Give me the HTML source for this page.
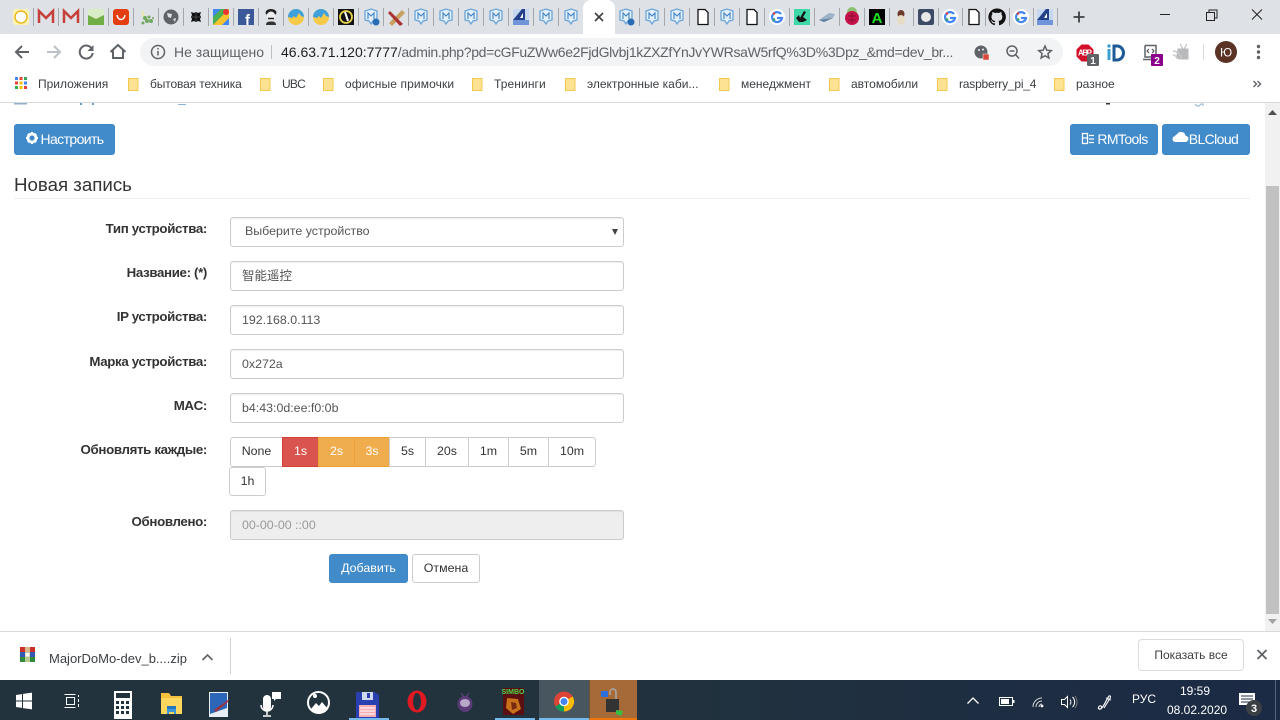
<!DOCTYPE html>
<html lang="ru"><head><meta charset="utf-8"><title>MajorDoMo</title>
<style>
*{box-sizing:border-box}
html,body{margin:0;padding:0;width:1280px;height:720px;overflow:hidden;background:#fff;font-family:"Liberation Sans","Noto Sans CJK SC",sans-serif}
.a{position:absolute;white-space:nowrap}
#ic{position:absolute;left:0;top:0;width:1280px;height:720px;z-index:2}
.bm{font-size:12px;color:#3c4043;top:77px;line-height:14px}
.lb{font-size:13.3px;font-weight:bold;color:#333;text-align:right;right:1073px;line-height:18px;letter-spacing:-.35px}
.in{left:230px;width:394px;height:30px;border:1px solid #ccc;border-radius:3px;background:#fff;font-size:12.4px;color:#555;line-height:28px;padding-left:11px;box-shadow:inset 0 1px 1px rgba(0,0,0,.07)}
.b{top:437px;height:30px;border:1px solid #ccc;background:#fff;font-size:12.4px;color:#333;line-height:27px;text-align:center}
.p{background:#428bca;border:1px solid #3f87c5;color:#fff;border-radius:3px;font-size:14px;letter-spacing:-.6px;height:31px;line-height:28px;top:124px;text-align:center}
</style></head><body>
<div class="a" style="left:0;top:0;width:1280px;height:34px;background:#dee1e6"></div>
<div class="a" style="left:583px;top:0;width:32px;height:34px;background:#fff;border-radius:8px 8px 0 0"></div>
<div class="a" style="left:140px;top:38px;width:923px;height:28px;background:#f1f3f4;border-radius:14px"></div>
<div class="a" style="left:0;top:102px;width:1280px;height:1px;background:#d9d9d9"></div>

<div class="a" style="left:174px;top:44px;font-size:14px;line-height:16px;color:#5f6368">Не защищено</div>
<div class="a" style="left:281px;top:44px;font-size:14px;line-height:16px;color:#202124">46.63.71.120:7777<span style="color:#5f6368;letter-spacing:-.33px">/admin.php?pd=cGFuZWw6e2FjdGlvbj1kZXZfYnJvYWRsaW5rfQ%3D%3Dpz_&amp;md=dev_br...</span></div>

<div class="a bm" style="left:38px">Приложения</div>
<div class="a bm" style="left:150px;letter-spacing:-.13px">бытовая техника</div>
<div class="a bm" style="left:282px;letter-spacing:-.8px">UBC</div>
<div class="a bm" style="left:345px;letter-spacing:.12px">офисные примочки</div>
<div class="a bm" style="left:494px;letter-spacing:.1px">Тренинги</div>
<div class="a bm" style="left:587px">электронные каби...</div>
<div class="a bm" style="left:741px">менеджмент</div>
<div class="a bm" style="left:851px">автомобили</div>
<div class="a bm" style="left:959px;letter-spacing:-.2px">raspberry_pi_4</div>
<div class="a bm" style="left:1076px">разное</div>

<!-- page -->
<div class="a p" style="left:14px;width:101px;padding-left:15px">Настроить</div>
<div class="a p" style="left:1070px;width:88px;padding-left:17px">RMTools</div>
<div class="a p" style="left:1162px;width:88px;padding-left:15px">BLCloud</div>
<div class="a" style="left:14px;top:174px;font-size:18.7px;line-height:22px;color:#333">Новая запись</div>
<div class="a" style="left:14px;top:198px;width:1236px;height:1px;background:#eee"></div>

<div class="a lb" style="top:220px">Тип устройства:</div>
<div class="a lb" style="top:264px">Название: (*)</div>
<div class="a lb" style="top:308px">IP устройства:</div>
<div class="a lb" style="top:353px">Марка устройства:</div>
<div class="a lb" style="top:397px">MAC:</div>
<div class="a lb" style="top:441px">Обновлять каждые:</div>
<div class="a lb" style="top:513px">Обновлено:</div>

<div class="a in" style="top:217px;padding-left:14px;line-height:27px">Выберите устройство</div>
<div class="a in" style="top:261px;font-size:12.5px;line-height:28px">智能遥控</div>
<div class="a in" style="top:305px">192.168.0.113</div>
<div class="a in" style="top:349px">0x272a</div>
<div class="a in" style="top:393px">b4:43:0d:ee:f0:0b</div>
<div class="a in" style="top:510px;background:#eee;color:#999">00-00-00 ::00</div>

<div class="a b" style="left:230px;width:53px;border-radius:3px 0 0 3px">None</div>
<div class="a b" style="left:282px;width:37px;background:#d9534f;border-color:#d43f3a;color:#fff">1s</div>
<div class="a b" style="left:318px;width:37px;background:#f0ad4e;border-color:#eea236;color:#fff">2s</div>
<div class="a b" style="left:354px;width:36px;background:#f0ad4e;border-color:#eea236;color:#fff">3s</div>
<div class="a b" style="left:389px;width:37px">5s</div>
<div class="a b" style="left:425px;width:44px">20s</div>
<div class="a b" style="left:468px;width:41px">1m</div>
<div class="a b" style="left:508px;width:41px">5m</div>
<div class="a b" style="left:548px;width:48px;border-radius:0 3px 3px 0">10m</div>
<div class="a b" style="left:229px;top:467px;width:37px;height:29px;border-radius:3px">1h</div>

<div class="a b" style="left:329px;top:554px;width:79px;height:29px;background:#428bca;border-color:#3f87c5;color:#fff;border-radius:3px">Добавить</div>
<div class="a b" style="left:412px;top:554px;width:68px;height:29px;border-radius:3px">Отмена</div>

<!-- scrollbar -->
<div class="a" style="left:1265px;top:103px;width:15px;height:528px;background:#f1f1f1"></div>
<div class="a" style="left:1266px;top:186px;width:13px;height:428px;background:#c1c1c1"></div>

<!-- download bar -->
<div class="a" style="left:0;top:631px;width:1280px;height:1px;background:#d9d9d9"></div>
<div class="a" style="left:49px;top:651px;font-size:13px;line-height:15px;color:#3c4043">MajorDoMo-dev_b....zip</div>
<div class="a" style="left:230px;top:638px;width:1px;height:36px;background:#d0d0d0"></div>
<div class="a" style="left:1138px;top:639px;width:106px;height:32px;border:1px solid #dadce0;border-radius:4px;font-size:12px;line-height:30px;text-align:center;color:#3c4043">Показать все</div>

<!-- taskbar -->
<div class="a" style="left:0;top:680px;width:1280px;height:40px;background:linear-gradient(90deg,#22333d 0,#22333d 45%,#1b2a45 100%)"></div>
<div class="a" style="left:539px;top:680px;width:50px;height:40px;background:#47565f;border-bottom:2px solid #76b9ed"></div>
<div class="a" style="left:589px;top:680px;width:48px;height:40px;background:#a66a38;border-left:1px solid #6d5238;border-bottom:2px solid #f0750a"></div>
<div class="a" style="left:349px;top:718px;width:40px;height:2px;background:#76b9ed"></div>
<div class="a" style="left:495px;top:718px;width:40px;height:2px;background:#76b9ed"></div>
<div class="a" style="left:1132px;top:692px;font-size:12px;line-height:14px;color:#fff">РУС</div>
<div class="a" style="left:1170px;top:684px;width:80px;font-size:12px;line-height:14px;color:#fff;text-align:left;padding-left:10px">19:59</div>
<div class="a" style="left:1167px;top:703px;font-size:12px;line-height:14px;color:#fff">08.02.2020</div>

<svg id="ic" viewBox="0 0 1280 720" xmlns="http://www.w3.org/2000/svg" font-family="Liberation Sans, sans-serif">
<!-- separators -->
<g stroke="#a4a8ad" stroke-width="1">
<path d="M33.500 8V26M58.500 8V26M83.500 8V26M108.500 8V26M133.500 8V26M158.500 8V26M183.500 8V26M208.500 8V26M233.500 8V26M258.500 8V26M283.500 8V26M308.500 8V26M333.500 8V26M358.500 8V26M383.500 8V26M408.500 8V26M433.500 8V26M458.500 8V26M483.500 8V26M508.500 8V26M533.500 8V26M558.500 8V26M639.500 8V26M664.500 8V26M689.500 8V26M714.500 8V26M739.500 8V26M764.500 8V26M789.500 8V26M814.500 8V26M839.500 8V26M864.500 8V26M889.500 8V26M913.500 8V26M938.500 8V26M962.500 8V26M985.500 8V26M1009.500 8V26M1033.500 8V26M1057.500 8V26"/>
</g>
<!-- favicons -->
<rect x="13" y="9" width="16" height="16" rx="3" fill="#fdf3b0"/><circle cx="21" cy="17" r="6" fill="#fff" stroke="#e8b820" stroke-width="1.500"/>
<path d="M39 23V11l7 7 7-7v12" fill="none" stroke="#c5403a" stroke-width="2.500"/>
<path d="M64 23V11l7 7 7-7v12" fill="none" stroke="#c5403a" stroke-width="2.500"/>
<rect x="88" y="9" width="16" height="16" fill="#6fae45"/><path d="M88 9h16v6l-8 4-8-4z" fill="#d8ecc8"/>
<rect x="113" y="9" width="16" height="16" rx="3" fill="#e43d12"/><path d="M117 15c1 6 7 6 8 0" fill="none" stroke="#fff" stroke-width="1.500"/>
<path d="M142 9l3 6-3 2z" fill="#e8e6b0"/><g fill="#6fa860"><circle cx="145" cy="18" r="2"/><circle cx="149" cy="17" r="1.500"/><circle cx="147" cy="21" r="2"/><circle cx="151" cy="21" r="2"/><circle cx="143" cy="23" r="1.500"/><circle cx="153" cy="18" r="1"/></g>
<circle cx="171" cy="17" r="7.500" fill="#5f6368"/><path d="M167 13l5 1-1 4-3-1zM173 19l3-1-1 4z" fill="#dee1e6"/>
<path d="M191 12l3 1 2-1 2 1 3-1-1 3 1 2-1 2 1 3-3-1-2 1-2-1-3 1 1-3-1-2 1-2z" fill="#111"/><path d="M196 13v8M192 17h8" stroke="#555" stroke-width=".7"/>
<rect x="213" y="9" width="16" height="16" fill="#4caf50"/><path d="M213 25l16-16v16z" fill="#f9c22e"/><path d="M213 9h8l-8 8z" fill="#4285f4"/><path d="M222 25l7-7v7z" fill="#4285f4"/><circle cx="226" cy="12" r="3" fill="#e33"/>
<rect x="238" y="9" width="16" height="16" fill="#3b5998"/><text x="245" y="25" font-size="15" font-weight="bold" fill="#fff">f</text>
<ellipse cx="271" cy="12.500" rx="5.500" ry="3.500" fill="#222"/><ellipse cx="271" cy="16" rx="4.300" ry="4.500" fill="#eee"/><path d="M268 18.500h6" stroke="#222" stroke-width="1.500"/><path d="M266 25c0-3 2-3.500 5-3.500s5 .5 5 3.500z" fill="#333"/>
<circle cx="296" cy="17" r="8" fill="#f7c948"/><path d="M288 17a8 8 0 0 1 16 0l-3-1-2-3-3 5-2-2-2 2z" fill="#3ea0dc"/>
<circle cx="321" cy="17" r="8" fill="#f7c948"/><path d="M313 17a8 8 0 0 1 16 0l-3-1-2-3-3 5-2-2-2 2z" fill="#3ea0dc"/>
<rect x="338" y="9" width="16" height="16" fill="#111"/><circle cx="346" cy="17" r="6" fill="none" stroke="#e8d44a" stroke-width="1.800"/><path d="M345 12l3 9" stroke="#fff" stroke-width="2"/>
<g fill="#e3effa" stroke="#6ba5da" stroke-width="1.300">
<path d="M365 11l6-2 6 2v9l-4 1-2 3-2-3-4-1z"/>
<path d="M415 11l6-2 6 2v9l-4 1-2 3-2-3-4-1z"/>
<path d="M440 11l6-2 6 2v9l-4 1-2 3-2-3-4-1z"/>
<path d="M465 11l6-2 6 2v9l-4 1-2 3-2-3-4-1z"/>
<path d="M490 11l6-2 6 2v9l-4 1-2 3-2-3-4-1z"/>
<path d="M540 11l6-2 6 2v9l-4 1-2 3-2-3-4-1z"/>
<path d="M565 11l6-2 6 2v9l-4 1-2 3-2-3-4-1z"/>
<path d="M620 11l6-2 6 2v9l-4 1-2 3-2-3-4-1z"/>
<path d="M646 11l6-2 6 2v9l-4 1-2 3-2-3-4-1z"/>
<path d="M671 11l6-2 6 2v9l-4 1-2 3-2-3-4-1z"/>
<path d="M721 11l6-2 6 2v9l-4 1-2 3-2-3-4-1z"/>
</g>
<g fill="none" stroke="#3f80c4" stroke-width="1.100">
<path d="M368 19v-6l3 3 3-3v6"/><path d="M418 19v-6l3 3 3-3v6"/><path d="M443 19v-6l3 3 3-3v6"/><path d="M468 19v-6l3 3 3-3v6"/><path d="M493 19v-6l3 3 3-3v6"/><path d="M543 19v-6l3 3 3-3v6"/><path d="M568 19v-6l3 3 3-3v6"/><path d="M623 19v-6l3 3 3-3v6"/><path d="M649 19v-6l3 3 3-3v6"/><path d="M674 19v-6l3 3 3-3v6"/><path d="M724 19v-6l3 3 3-3v6"/>
</g>
<circle cx="376" cy="22" r="3.500" fill="#2a6db5"/><circle cx="631" cy="22" r="3.500" fill="#2a6db5"/>
<path d="M389 23l13-13 3 3-13 13z" fill="#c8a060"/><path d="M390 11l13 13-3 2-12-13z" fill="#a33"/>
<rect x="513" y="9" width="16" height="16" fill="#c6d8f0"/><path d="M513 20l9-11h3v11z" fill="#23408a"/><path d="M513 20h16v5h-16z" fill="#6f95d8"/><path d="M520 18l3-5v5z" fill="#fff"/>
<g fill="#fff" stroke="#111" stroke-width="1.300">
<path d="M698 9.500h7l3 3v12h-10z"/><path d="M747 9.500h7l3 3v12h-10z"/><path d="M969 9.500h7l3 3v12h-10z"/>
</g>
<circle cx="777" cy="17" r="8" fill="#fff"/><circle cx="950" cy="17" r="8" fill="#fff"/><circle cx="1021" cy="17" r="8" fill="#fff"/>
<g fill="none" stroke-width="2.200">
<path d="M781 14a5 5 0 1 0 1 4h-5" stroke="#4285f4"/><path d="M773 13l2 1" stroke="#ea4335"/><path d="M773 20l2-1" stroke="#34a853"/>
<path d="M954 14a5 5 0 1 0 1 4h-5" stroke="#4285f4"/><path d="M946 13l2 1" stroke="#ea4335"/><path d="M946 20l2-1" stroke="#34a853"/>
<path d="M1025 14a5 5 0 1 0 1 4h-5" stroke="#4285f4"/><path d="M1017 13l2 1" stroke="#ea4335"/><path d="M1017 20l2-1" stroke="#34a853"/>
</g>
<rect x="794" y="9" width="16" height="16" fill="#3fd6a8"/><path d="M799 22l-3-4 3-3 1 3 4-7 2 1-3 5 4 3-4 2z" fill="#111"/>
<path d="M819 20l10-7 6 1-2 4-9 4z" fill="#9db3c9"/><path d="M819 20l14-2-9 4z" fill="#5f7f9f"/>
<circle cx="852" cy="12" r="5" fill="#6bb43f" opacity=".7"/><circle cx="852" cy="18" r="7" fill="#c5124a"/><path d="M848 16h8M848 20h8M852 13v10" stroke="#8f0a33" stroke-width="1"/>
<rect x="869" y="9" width="16" height="16" fill="#000"/><text x="877" y="23" font-size="15" font-weight="bold" text-anchor="middle" fill="#1ee01e">A</text>
<ellipse cx="901" cy="14" rx="3.500" ry="4" fill="#6d3b2c"/><ellipse cx="901" cy="20" rx="4" ry="5" fill="#e8dcc5"/>
<rect x="918" y="9" width="16" height="16" rx="2" fill="#3c4a66"/><circle cx="926" cy="17" r="5" fill="#e8e8e8"/>
<path fill="#111" d="M997 8.500a8.500 8.500 0 0 0-2.700 16.600c.4.100.6-.2.600-.4v-1.500c-2.400.5-2.900-1-2.900-1-.4-1-1-1.300-1-1.300-.8-.5.100-.5.100-.5.900.1 1.300.9 1.300.9.800 1.300 2 .9 2.500.7.100-.6.300-.9.500-1.100-1.900-.2-3.900-1-3.900-4.200 0-.9.300-1.700.9-2.300-.1-.2-.4-1.100.1-2.300 0 0 .7-.2 2.300.9a8 8 0 0 1 4.200 0c1.600-1.100 2.300-.9 2.300-.9.500 1.200.2 2.100.1 2.300.5.600.9 1.400.9 2.300 0 3.300-2 4-3.900 4.200.3.300.6.800.6 1.600v2.300c0 .2.100.5.600.4A8.500 8.500 0 0 0 997 8.500z"/>
<rect x="1037" y="9" width="16" height="16" fill="#c6d8f0"/><path d="M1037 20l9-11h3v11z" fill="#23408a"/><path d="M1037 20h16v5h-16z" fill="#6f95d8"/><path d="M1044 18l3-5v5z" fill="#fff"/>
<!-- tab close, new tab, window controls -->
<path d="M595 13l8 8M603 13l-8 8" stroke="#3c4043" stroke-width="1.600" fill="none"/>
<path d="M1079 11.500v11M1073.500 17h11" stroke="#3c4043" stroke-width="1.800"/>
<path d="M1160 14.500h10" stroke="#222" stroke-width="1"/>
<path d="M1206.500 12.500h8v8h-8zM1209 12.500v-2.500h8v8h-2.500" fill="none" stroke="#222" stroke-width="1"/>
<path d="M1252 9.500l10 10M1262 9.500l-10 10" stroke="#222" stroke-width="1"/>
<!-- nav -->
<path d="M29 52H16M22 46l-6 6 6 6" fill="none" stroke="#5f6368" stroke-width="2"/>
<path d="M47 52h13M54 46l6 6-6 6" fill="none" stroke="#bdc1c6" stroke-width="2"/>
<path d="M92 49a6.500 6.500 0 1 0 .7 4" fill="none" stroke="#5f6368" stroke-width="2"/><path d="M93.500 45v6h-6z" fill="#5f6368"/>
<path d="M110.500 52l7.500-7 7.500 7M113 50.500v7.500h10v-7.500" fill="none" stroke="#5f6368" stroke-width="2"/>
<circle cx="158" cy="52" r="6.500" fill="none" stroke="#5f6368" stroke-width="1.500"/><path d="M158 51v4.500M158 48v1.500" stroke="#5f6368" stroke-width="1.500"/>
<path d="M271.500 45v14" stroke="#bdc1c6"/>
<circle cx="981" cy="52" r="6.500" fill="#5f6368"/><circle cx="979" cy="50" r="1" fill="#f1f3f4"/><circle cx="983" cy="49.500" r="1" fill="#f1f3f4"/><rect x="983" y="54" width="6" height="6" fill="#d9483b" stroke="#f1f3f4" stroke-width=".5"/>
<circle cx="1012" cy="51" r="5" fill="none" stroke="#5f6368" stroke-width="1.500"/><path d="M1016 55l3 3.500M1009.500 51h5" stroke="#5f6368" stroke-width="1.500"/>
<path d="M1045 46l1.800 4.200 4.500.4-3.400 3 1 4.400-3.900-2.300-3.900 2.300 1-4.400-3.400-3 4.500-.4z" fill="none" stroke="#5f6368" stroke-width="1.500"/>
<!-- extensions -->
<path d="M1081.500 44.500h7l5 5v7l-5 5h-7l-5-5v-7z" fill="#d3102a"/><text x="1085" y="55.500" font-size="8" font-weight="bold" text-anchor="middle" fill="#fff" textLength="14">ABP</text>
<rect x="1087" y="54" width="12" height="12" rx="1.500" fill="#5f6368"/><text x="1093" y="64" font-size="10" font-weight="bold" text-anchor="middle" fill="#fff">1</text>
<path d="M1109 49v11" stroke="#3d9fd0" stroke-width="3"/><circle cx="1109" cy="46" r="1.700" fill="#3d9fd0"/><path d="M1114 46h3a6.500 7 0 0 1 0 14h-3z" fill="none" stroke="#1e5a96" stroke-width="3"/>
<path d="M1145 45.500h11v12M1145 45.500v11.500h7v2.500h-9" fill="none" stroke="#5f6368" stroke-width="1.500"/><path d="M1149 49l-2 2 2 2M1152 49l2 2-2 2" fill="none" stroke="#444" stroke-width="1"/>
<rect x="1151" y="54" width="12" height="12" rx="1" fill="#8b008b"/><text x="1157" y="64" font-size="10" font-weight="bold" text-anchor="middle" fill="#fff">2</text>
<path d="M1178 49h10v10h-9l-2-3zM1180 44l3 5M1187 44l-3 5" fill="#b8babc" stroke="#b8babc"/><path d="M1173 51a8 8 0 0 1 8 8M1173 55a4 4 0 0 1 4 4" fill="none" stroke="#c8cacc" stroke-width="1.500"/>
<path d="M1203.500 44v16" stroke="#dadce0"/>
<circle cx="1226" cy="52" r="11" fill="#5a3325"/><text x="1226" y="56.500" font-size="12" text-anchor="middle" fill="#fff">Ю</text>
<circle cx="1258.500" cy="46.500" r="1.700" fill="#5f6368"/><circle cx="1258.500" cy="52" r="1.700" fill="#5f6368"/><circle cx="1258.500" cy="57.500" r="1.700" fill="#5f6368"/>
<!-- bookmarks -->
<g fill="#4285f4"><rect x="15" y="77" width="3" height="3"/><rect x="15" y="81.500" width="3" height="3" fill="#ea4335"/><rect x="15" y="86" width="3" height="3" fill="#34a853"/><rect x="19.500" y="77" width="3" height="3" fill="#ea4335"/><rect x="19.500" y="81.500" width="3" height="3" fill="#fbbc04"/><rect x="19.500" y="86" width="3" height="3" fill="#fbbc04"/><rect x="24" y="77" width="3" height="3" fill="#34a853"/><rect x="24" y="81.500" width="3" height="3"/><rect x="24" y="86" width="3" height="3" fill="#ea4335"/></g>
<g fill="#fde293" stroke="#f2c94c" stroke-width="1">
<path d="M128.500 78.500h9.500v12h-9.500z"/><path d="M260.500 78.500h9.500v12h-9.500z"/><path d="M323.500 78.500h9.500v12h-9.500z"/><path d="M472.500 78.500h9.500v12h-9.500z"/><path d="M565.500 78.500h9.500v12h-9.500z"/><path d="M719.500 78.500h9.500v12h-9.500z"/><path d="M829.500 78.500h9.500v12h-9.500z"/><path d="M937.500 78.500h9.500v12h-9.500z"/><path d="M1054.500 78.500h9.500v12h-9.500z"/>
</g>
<path d="M1253.500 81l3 3-3 3M1257.500 81l3 3-3 3" fill="none" stroke="#5f6368" stroke-width="1.400"/>
<!-- clipped page bits -->
<path d="M14 103h13v1.500H14zM178 104h8v1h-8z" fill="#8fb0d0"/><path d="M80 103h2v2h-2zM92 103h2v2h-2z" fill="#5f9bd0"/>
<path d="M1106 103h4v1.500h-4z" fill="#333"/><path d="M1195 104l2 2 2 0 2-2 2 0 0 2" stroke="#8fb0d0" fill="none"/>
<!-- button icons -->
<circle cx="32" cy="138" r="4" fill="none" stroke="#fff" stroke-width="2.800"/><path d="M32 132v2.500M32 141.500v2.500M26 138h2.500M35.500 138h2.500M27.800 133.800l1.700 1.700M34.500 140.500l1.700 1.700M36.200 133.800l-1.700 1.700M29.500 140.500l-1.700 1.700" stroke="#fff" stroke-width="1.900"/>
<path d="M1082.500 133.500h5v10h-5zM1089 135.500h5M1089 139h5M1089 142.500h5M1082.500 138h5" fill="none" stroke="#fff" stroke-width="1.300"/>
<path d="M1175 142h10a3.200 3.200 0 0 0 .5-6.400 4.500 4.500 0 0 0-8.400-1.300 3 3 0 0 0-2.100 1.800 3 3 0 0 0 0 5.900z" fill="#fff"/>
<!-- select arrow -->
<path d="M612 229h6l-3 6z" fill="#444"/>
<!-- scroll arrows -->
<path d="M1268 115l4.500-5 4.500 5z" fill="#505050"/>
<path d="M1268 619l4.500 5 4.500-5z" fill="#a3a3a3"/>
<!-- download -->
<rect x="20" y="647" width="15" height="15" fill="#7a2a8a"/><rect x="20" y="647" width="15" height="5" fill="#c9302c"/><rect x="20" y="657" width="15" height="5" fill="#2e8b3d"/><rect x="20" y="652" width="15" height="5" fill="#3558b0"/><path d="M25 647h5v15h-5z" fill="#d9d9a8" opacity=".8"/><rect x="25.500" y="653" width="4" height="3.500" fill="#fff"/>
<path d="M202.500 660l5-5 5 5" fill="none" stroke="#5f6368" stroke-width="1.600"/>
<path d="M1257.500 650l9 9M1266.500 650l-9 9" stroke="#5f6368" stroke-width="1.800"/>
<!-- taskbar icons -->
<path d="M16 695l6-.9v6.400h-6zM23 693.900l9-1.300v7.900h-9zM16 701.500h6v6.400l-6-.9zM23 701.500h9v7.900l-9-1.300z" fill="#fff"/>
<path d="M64.500 694.500h11M64.500 707.500h11M66.500 697.500h8v7h-8zM78.500 695v2M78.500 699v3M78.500 704v3" fill="none" stroke="#fff" stroke-width="1"/>
<rect x="114" y="691" width="18" height="28" fill="#fff"/><rect x="116" y="693" width="14" height="5" fill="#22333d"/><g fill="#22333d"><rect x="116" y="701" width="3" height="3"/><rect x="121" y="701" width="3" height="3"/><rect x="126" y="701" width="3" height="3"/><rect x="116" y="706" width="3" height="3"/><rect x="121" y="706" width="3" height="3"/><rect x="126" y="706" width="3" height="3"/><rect x="116" y="711" width="3" height="3"/><rect x="121" y="711" width="3" height="3"/><rect x="126" y="711" width="3" height="3"/></g>
<path d="M161 693h8l2 3h11v18h-21z" fill="#f4c23e"/><path d="M161 698h21v16h-21z" fill="#ffd75e"/><path d="M167 709h9v5h-2v-2h-5v2h-2z" fill="#3f96d8"/><rect x="167" y="706" width="9" height="3" fill="#2176c0"/>
<rect x="209" y="692" width="19" height="25" fill="#e8eef5"/><path d="M210 693h17v15l-17 6z" fill="#2b66b8"/><path d="M214 710l14-10 1 1-13 11z" fill="#a03040"/>
<path d="M263 699a4 4 0 0 1 8 0v8a4 4 0 0 1-8 0z" fill="#fff"/><path d="M261 705a6 6 0 0 0 12 0M267 711v4M263 716h8" fill="none" stroke="#fff" stroke-width="1.500"/><path d="M272 692h9v7h-5l-2 2v-2h-2z" fill="#fff"/>
<circle cx="318.500" cy="702.500" r="10.500" fill="none" stroke="#fff" stroke-width="2"/><path d="M311 709l5-6 3 3 3-4 6 7a10 10 0 0 1-17 0z" fill="#fff"/><circle cx="315" cy="696" r="2" fill="#fff"/>
<path d="M356 692h19l4 3v23h-23z" fill="#2a3fb0"/><rect x="359" y="705" width="17" height="12" fill="#f5aeb4"/><path d="M360 708h15M360 711h15M360 714h15" stroke="#fff" stroke-width="1"/><rect x="362" y="692" width="11" height="8" fill="#d0d8f0"/><rect x="367" y="693" width="3" height="5" fill="#2a3fb0"/>
<ellipse cx="417" cy="701.500" rx="9.500" ry="11" fill="#e01a22"/><ellipse cx="417" cy="701.500" rx="4" ry="8.500" fill="#22333d"/>
<ellipse cx="465" cy="704" rx="7.500" ry="8" fill="#5b3a78"/><ellipse cx="465" cy="703" rx="5" ry="4" fill="#b8a8c8"/><path d="M461 693l3 4M469 693l-3 4" stroke="#6a4a8a"/>
<rect x="503" y="688" width="21" height="27" fill="#5a1010"/><path d="M507 698l11 1 3 10-8 5-7-6z" fill="#c8701a"/><path d="M511 702l5 1 1 5-5 2z" fill="#7a2a10"/><text x="513" y="694" font-size="7" font-weight="bold" text-anchor="middle" fill="#4ed44e">SIMBO</text>
<circle cx="564" cy="701.500" r="10" fill="#db4437"/><path d="M564 701.500l-8.700 5a10 10 0 0 0 8.700 5z" fill="#0f9d58"/><path d="M564 701.500v10a10 10 0 0 0 8.700-15z" fill="#fbbc04"/><path d="M564 701.500l-8.700 5a10 10 0 0 0 3.700 3.500l5-8.500z" fill="#0f9d58"/><circle cx="564" cy="701.500" r="4.800" fill="#fff"/><circle cx="564" cy="701.500" r="3.500" fill="#4285f4"/>
<rect x="606" y="699" width="13" height="13" fill="#333"/><path d="M601 691h7v6h-7z" fill="#2a6fdc"/><path d="M610 695v-3a3 3 0 0 1 6 0v7" fill="none" stroke="#aaa" stroke-width="1.500"/><path d="M616 710l7 1-2 5-5-2z" fill="#35c040"/>
<!-- tray -->
<path d="M967.500 703.500l5.500-5.500 5.500 5.500" fill="none" stroke="#fff" stroke-width="1.300"/>
<rect x="999.500" y="697.500" width="13" height="8" fill="none" stroke="#fff"/><rect x="1001" y="699" width="8" height="5" fill="#fff"/><rect x="1013" y="700" width="1.500" height="3" fill="#fff"/>
<path d="M1033 707a9 9 0 0 1 9-9M1036 707a6 6 0 0 1 6-6M1039 707a3 3 0 0 1 3-3" fill="none" stroke="#d8d8d8" stroke-width="1"/><circle cx="1042" cy="706" r="1.400" fill="#fff"/>
<path d="M1061.500 699.500h3l3-3v11l-3-3h-3zM1070 699.500a4 4 0 0 1 0 5M1072.500 697a7 7 0 0 1 0 10" fill="none" stroke="#fff" stroke-width="1"/><path d="M1075 696a10 10 0 0 1 0 12" fill="none" stroke="#777" stroke-width="1"/>
<path d="M1098 708c2 3 5 0 3-2-2-1-4 3-1 3 3 0 6-9 9-13 2-1 2 2 0 4l-5 8M1106 698l5 2" fill="none" stroke="#fff" stroke-width="1.100"/>
<path d="M1239 693h16v12h-16z" fill="#fff"/><path d="M1241 696h12M1241 699h12M1241 702h8" stroke="#1b2a45" stroke-width="1"/>
<circle cx="1254" cy="708" r="8" fill="#3a3f44"/><text x="1254" y="712" font-size="11" font-weight="bold" text-anchor="middle" fill="#fff">3</text>
<path d="M1275.500 680v40" stroke="#55647a"/>
</svg>
</body></html>
